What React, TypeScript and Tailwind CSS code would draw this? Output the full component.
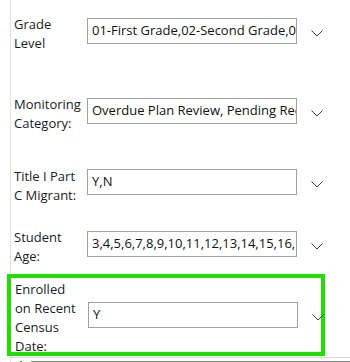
const FONT = "font-['Open_Sans',sans-serif]";

type Field = { label: string; value: string; rowClass: string; inputClass?: string };

const FIELDS: Field[] = [
  { label: 'Grade Level', value: '01-First Grade,02-Second Grade,03-Third Grade', rowClass: 'mt-[15px]' },
  { label: 'Monitoring Category:', value: 'Overdue Plan Review, Pending Records Request', rowClass: 'mt-[42px]' },
  { label: 'Title I Part C Migrant:', value: 'Y,N', rowClass: 'mt-[34px]', inputClass: 'mt-[2px]' },
  { label: 'Student Age:', value: '3,4,5,6,7,8,9,10,11,12,13,14,15,16,17,18,19,20,21', rowClass: 'mt-[23px]' },
];

function Chevron() {
  return (
    <svg width="12" height="7" viewBox="0 0 12 7" className="mt-[12px] ml-[14px] shrink-0">
      <polyline points="0.5,0.5 6,6 11.5,0.5" fill="none" stroke="#3c3c3c" strokeWidth="1" />
    </svg>
  );
}

function Picker({ value, className = 'mt-[3px]' }: { value: string; className?: string }) {
  return (
    <div className={`flex items-start ${className}`}>
      <div className="w-[210px] h-[26px] border border-[#a0a0a0] bg-white px-[4px] flex items-center overflow-hidden whitespace-nowrap text-[13px] text-[#111]">
        {value}
      </div>
      <Chevron />
    </div>
  );
}

function Label({ text }: { text: string }) {
  return (
    <div className="w-[66px] mr-[7px] shrink-0 text-[13px] leading-[19px] text-[#1b1b1b]">{text}</div>
  );
}

function Row({ field }: { field: Field }) {
  return (
    <div className={`flex items-start pl-[3px] ${field.rowClass}`}>
      <Label text={field.label} />
      <Picker value={field.value} className={field.inputClass} />
    </div>
  );
}

export default function App() {
  return (
    <div className={`w-[350px] h-[362px] bg-white overflow-hidden ${FONT}`}>
      <div className="ml-[10px] h-full border-l border-[#e2e2e2] flex flex-col">
        {FIELDS.map((f) => (
          <Row key={f.label} field={f} />
        ))}

        {/* highlighted row */}
        <div className="-ml-[4px] mt-[8px] w-[318px] h-[82px] border-[4px] border-[#22dd00] flex items-start pl-[4px] pt-[2px]">
          <Label text="Enrolled on Recent Census Date:" />
          <Picker value="Y" className="mt-[22px]" />
        </div>

        <div className="flex-1" />
        <div className="h-px bg-[#dadada] mb-[3px]" />
        <div className="flex items-center h-px">
          <div className="ml-[9px] w-[2px] h-px bg-[#707070]" />
          <div className="ml-[9px] flex-1 h-px bg-[#8a8a8a]" />
        </div>
      </div>
    </div>
  );
}
